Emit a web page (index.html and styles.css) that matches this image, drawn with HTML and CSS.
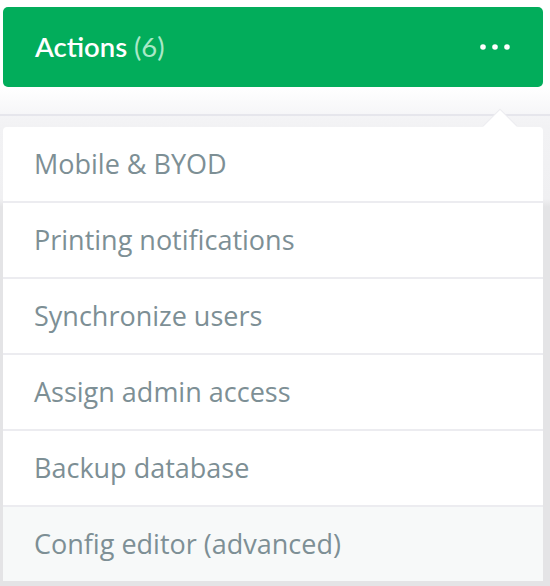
FILE: index.html
```html
<!DOCTYPE html>
<html>
<head>
<meta charset="utf-8">
<link rel="stylesheet" href="styles.css">
</head>
<body>
<div class="top">
  <header class="bar">
    <span class="title">Actions <span class="count">(6)</span></span>
    <svg class="dots" width="32" height="8" viewBox="0 0 32 8"><circle cx="4" cy="4" r="2.8" fill="#fff"/><circle cx="16" cy="4" r="2.8" fill="#fff"/><circle cx="28" cy="4" r="2.8" fill="#fff"/></svg>
  </header>
</div>
<div class="sep"></div>
<div class="area">
  <ul class="menu">
    <li class="item">Mobile &amp; BYOD</li>
    <li class="item">Printing notifications</li>
    <li class="item">Synchronize users</li>
    <li class="item">Assign admin access</li>
    <li class="item">Backup database</li>
    <li class="item hover">Config editor (advanced)</li>
  </ul>
</div>
</body>
</html>
```
FILE: styles.css
```css
html, body {
  margin: 0;
  padding: 0;
  background: #e5e5e8;
  font-family: "Lato", "Liberation Sans", sans-serif;
}
.top {
  background: #fff;
  padding: 7px 7px 0 3px;
}
.bar {
  height: 80px;
  background: #02ad5b;
  border-radius: 5px;
  display: flex;
  align-items: center;
  justify-content: space-between;
  padding: 0 32px 0 32px;
}
.title {
  color: #fff;
  font-size: 27.5px;
  font-weight: 600;
  line-height: 80px;
}
.count {
  color: #a9e8c7;
  font-weight: 400;
}
.dots {
  display: block;
}
.sep {
  height: 40px;
  box-sizing: border-box;
  background: linear-gradient(#ffffff 0, #f6f6f8 27px, #e6e6ec 27px, #e6e6ec 29px, #f4f4f6 29px, #f2f2f4 40px);
}
.area {
  background: linear-gradient(#f2f2f4 0, #f0f0f2 72px, #e4e4e6 80px);
  padding: 0 7px 5px 3px;
}
.menu {
  list-style: none;
  margin: 0;
  padding: 0;
  background: #fff;
  border-radius: 4px 4px 0 0;
  position: relative;
}
.menu::before {
  content: "";
  position: absolute;
  width: 24px;
  height: 24px;
  background: #fff;
  top: -12px;
  right: 31px;
  transform: rotate(45deg);
  box-shadow: -1px -1px 0 #ececf0;
}
.item {
  position: relative;
  height: 74px;
  line-height: 74px;
  padding-left: 31px;
  font-family: "Open Sans", sans-serif;
  font-size: 27px;
  color: #7d8f95;
}
.item + .item {
  border-top: 2px solid #ececf0;
}
.item.hover {
  background: #f7f9f9;
}
```
